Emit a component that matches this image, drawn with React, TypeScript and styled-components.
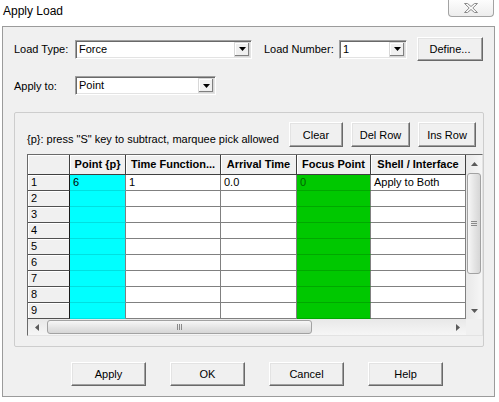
import React from "react";
import styled, { createGlobalStyle } from "styled-components";

const Global = createGlobalStyle`
  html, body { margin: 0; padding: 0; background: #fff; }
  body { font-family: "Liberation Sans", Arial, sans-serif; font-size: 11px; color: #000; }
  * { box-sizing: border-box; }
`;

const Window = styled.div`
  width: 499px;
  height: 402px;
  background: #fff;
  display: flex;
  flex-direction: column;
  overflow: hidden;
`;

const TitleBar = styled.div`
  height: 26px;
  flex-shrink: 0;
  display: flex;
  justify-content: space-between;
  align-items: flex-start;
`;

const Title = styled.div`
  font-size: 12px;
  line-height: 15px;
  padding: 4px 0 0 3px;
`;

const CloseBtn = styled.div`
  width: 46px;
  height: 17px;
  margin-right: 5px;
  border: 1px solid #a3a3a3;
  border-top: none;
  border-radius: 0 0 4px 4px;
  background: linear-gradient(#fdfdfd, #ededed);
  display: flex;
  align-items: center;
  justify-content: center;
`;

const Client = styled.div`
  margin: 0 4px 0 2px;
  height: 371px;
  border: 1px solid #9b9b9b;
  background: #f0f0f0;
  padding: 10px 0 0 11px;
  display: flex;
  flex-direction: column;
`;

const FormRow = styled.div<{ $h: number; $mt?: number }>`
  display: flex;
  align-items: center;
  height: ${(p) => p.$h}px;
  margin-top: ${(p) => p.$mt ?? 0}px;
`;

const Label = styled.div<{ $w: number }>`
  width: ${(p) => p.$w}px;
  flex-shrink: 0;
  white-space: nowrap;
`;

const Combo = styled.div<{ $w: number; $ml?: number }>`
  width: ${(p) => p.$w}px;
  height: 19px;
  margin-left: ${(p) => p.$ml ?? 0}px;
  flex-shrink: 0;
  background: #fff;
  border: 1px solid;
  border-color: #a0a0a0 #ffffff #ffffff #a0a0a0;
  box-shadow: inset 1px 1px 0 #696969, inset -1px -1px 0 #e3e3e3;
  padding: 1px;
  display: flex;
  align-items: stretch;
`;

const ComboText = styled.div`
  flex: 1;
  padding-left: 2px;
  line-height: 15px;
  font-size: 11px;
`;

const DropBtn = styled.div`
  width: 16px;
  background: #f0f0f0;
  box-shadow: inset -1px -1px 0 #808080, inset 1px 1px 0 #ffffff;
  border: 1px solid #d8d8d8;
  display: flex;
  align-items: center;
  justify-content: center;
`;

const Button = styled.div<{ $w: number; $h?: number }>`
  width: ${(p) => p.$w}px;
  height: ${(p) => p.$h ?? 24}px;
  flex-shrink: 0;
  background: #f0f0f0;
  border: 1px solid;
  border-color: #ffffff #696969 #696969 #ffffff;
  box-shadow: inset -1px -1px 0 #a0a0a0, inset 1px 1px 0 #e3e3e3;
  display: flex;
  align-items: center;
  justify-content: center;
  font-size: 11px;
  white-space: nowrap;
`;

const GroupBox = styled.div`
  margin-top: 17px;
  width: 470px;
  height: 235px;
  border: 1px solid #cdcdcd;
  border-radius: 2px;
  padding: 9px 0 0 12px;
  display: flex;
  flex-direction: column;
`;

const Toolbar = styled.div`
  display: flex;
  height: 25px;
  gap: 8px;
  margin-right: 7px;
`;

const Hint = styled.div`
  flex: 1;
  align-self: flex-end;
  line-height: 13px;
  padding-bottom: 1px;
  white-space: nowrap;
`;

const GridFrame = styled.div`
  margin-top: 7px;
  width: 456px;
  height: 182px;
  border: 1px solid;
  border-color: #6a6a6a #e3e3e3 #e3e3e3 #6a6a6a;
  background: #fff;
  display: grid;
  grid-template-columns: 438px 16px;
  grid-template-rows: 164px 16px;
`;

const Table = styled.div`
  display: grid;
  grid-template-columns: 42px 56px 95px 76px 74px 95px;
  grid-template-rows: 20px repeat(9, 16px);
  overflow: hidden;
`;

const HeadCell = styled.div`
  background: #f0f0f0;
  border-right: 1px solid #404040;
  border-bottom: 1px solid #404040;
  box-shadow: inset 1px 1px 0 #ffffff;
  font-weight: bold;
  text-align: center;
  line-height: 19px;
  white-space: nowrap;
  overflow: hidden;
`;

const RowHead = styled.div`
  background: #f0f0f0;
  border-right: 1px solid #1a1a1a;
  border-bottom: 1px solid #505050;
  box-shadow: inset 1px 1px 0 #ffffff;
  padding-left: 3px;
  line-height: 15px;
`;

const Cell = styled.div<{ $bg?: string; $line?: string; $color?: string }>`
  background: ${(p) => p.$bg ?? "#ffffff"};
  color: ${(p) => p.$color ?? "#000"};
  border-right: 1px solid #808080;
  border-bottom: 1px solid ${(p) => p.$line ?? "#808080"};
  padding-left: 3px;
  line-height: 15px;
  white-space: nowrap;
  overflow: hidden;
`;

const VScroll = styled.div`
  background: linear-gradient(to right, #e8e8e8, #f6f6f6);
  display: flex;
  flex-direction: column;
`;

const HScroll = styled.div`
  background: linear-gradient(#e8e8e8, #f6f6f6);
  display: flex;
`;

const ArrowBox = styled.div`
  width: 16px;
  height: 17px;
  flex-shrink: 0;
  display: flex;
  align-items: center;
  justify-content: center;
`;

const HArrowBox = styled(ArrowBox)`
  width: 17px;
  height: 16px;
`;

const Spacer = styled.div`
  flex: 1;
`;

const VThumb = styled.div`
  margin: 1px 1px 0 1px;
  height: 101px;
  border: 1px solid #a2a2a2;
  border-radius: 3px;
  background: linear-gradient(to right, #f7f7f7, #e4e4e4 55%, #d6d6d6);
  display: flex;
  flex-direction: column;
  align-items: center;
  justify-content: center;
  gap: 1px;
`;

const HThumb = styled.div`
  margin: 1px 0 1px 2px;
  width: 265px;
  border: 1px solid #a2a2a2;
  border-radius: 3px;
  background: linear-gradient(#f7f7f7, #e4e4e4 55%, #d6d6d6);
  display: flex;
  align-items: center;
  justify-content: center;
  gap: 1px;
`;

const GripH = styled.div`
  width: 6px;
  height: 1px;
  background: #8a8a8a;
`;

const GripV = styled.div`
  width: 1px;
  height: 6px;
  background: #8a8a8a;
`;

const Corner = styled.div`
  background: #f0f0f0;
`;

const BottomRow = styled.div`
  margin-top: 15px;
  margin-left: 57px;
  display: flex;
  gap: 24px;
`;

const Tri = ({ dir, color = "#000" }: { dir: "up" | "down" | "left" | "right"; color?: string }) => {
  const pts: Record<string, string> = {
    down: "0,0 7,0 3.5,4",
    up: "0,4 7,4 3.5,0",
    left: "4,0 4,7 0,3.5",
    right: "0,0 0,7 4,3.5",
  };
  const v = dir === "up" || dir === "down";
  return (
    <svg width={v ? 7 : 4} height={v ? 4 : 7} viewBox={v ? "0 0 7 4" : "0 0 4 7"}>
      <polygon points={pts[dir]} fill={color} />
    </svg>
  );
};

const ComboBox = ({ w, value, ml }: { w: number; value: string; ml?: number }) => (
  <Combo $w={w} $ml={ml}>
    <ComboText>{value}</ComboText>
    <DropBtn>
      <Tri dir="down" />
    </DropBtn>
  </Combo>
);

const headers = ["", "Point {p}", "Time Function...", "Arrival Time", "Focus Point", "Shell / Interface"];

const rows = [
  ["1", "6", "1", "0.0", "0", "Apply to Both"],
  ...Array.from({ length: 8 }, (_, i) => [String(i + 2), "", "", "", "", ""]),
];

export default function App() {
  return (
    <>
      <Global />
      <Window>
        <TitleBar>
          <Title>Apply Load</Title>
          <CloseBtn>
            <svg width="14" height="10" viewBox="0 0 14 10">
              <polygon
                points="0.5,0.5 3.5,0.5 7,3.5 10.5,0.5 13.5,0.5 8.8,5 13.5,9.5 10.5,9.5 7,6.5 3.5,9.5 0.5,9.5 5.2,5"
                fill="#fafafa"
                stroke="#8a8a8a"
                strokeWidth="1"
                strokeLinejoin="round"
              />
            </svg>
          </CloseBtn>
        </TitleBar>
        <Client>
          <FormRow $h={24}>
            <Label $w={61}>Load Type:</Label>
            <ComboBox w={177} value="Force" />
            <Label $w={75} style={{ marginLeft: 12 }}>
              Load Number:
            </Label>
            <ComboBox w={68} value="1" />
            <Button $w={66} style={{ marginLeft: 10 }}>
              Define...
            </Button>
          </FormRow>
          <FormRow $h={19} $mt={15}>
            <Label $w={61}>Apply to:</Label>
            <ComboBox w={141} value="Point" />
          </FormRow>
          <GroupBox>
            <Toolbar>
              <Hint>{'{p}: press "S" key to subtract, marquee pick allowed'}</Hint>
              <Button $w={54} $h={25}>Clear</Button>
              <Button $w={59} $h={25}>Del Row</Button>
              <Button $w={58} $h={25}>Ins Row</Button>
            </Toolbar>
            <GridFrame>
              <Table>
                {headers.map((h, i) => (
                  <HeadCell key={"h" + i}>{h}</HeadCell>
                ))}
                {rows.map((r) => (
                  <React.Fragment key={r[0]}>
                    <RowHead>{r[0]}</RowHead>
                    <Cell $bg="#00ffff" $line="#00e0e0">{r[1]}</Cell>
                    <Cell>{r[2]}</Cell>
                    <Cell>{r[3]}</Cell>
                    <Cell $bg="#00c800" $line="#00a800" $color="#006400">{r[4]}</Cell>
                    <Cell>{r[5]}</Cell>
                  </React.Fragment>
                ))}
              </Table>
              <VScroll>
                <ArrowBox>
                  <Tri dir="up" color="#5a5a5a" />
                </ArrowBox>
                <VThumb>
                  <GripH />
                  <GripH />
                  <GripH />
                </VThumb>
                <Spacer />
                <ArrowBox>
                  <Tri dir="down" color="#5a5a5a" />
                </ArrowBox>
              </VScroll>
              <HScroll>
                <HArrowBox>
                  <Tri dir="left" color="#5a5a5a" />
                </HArrowBox>
                <HThumb>
                  <GripV />
                  <GripV />
                  <GripV />
                </HThumb>
                <Spacer />
                <HArrowBox>
                  <Tri dir="right" color="#5a5a5a" />
                </HArrowBox>
              </HScroll>
              <Corner />
            </GridFrame>
          </GroupBox>
          <BottomRow>
            <Button $w={75}>Apply</Button>
            <Button $w={75}>OK</Button>
            <Button $w={75}>Cancel</Button>
            <Button $w={75}>Help</Button>
          </BottomRow>
        </Client>
      </Window>
    </>
  );
}
